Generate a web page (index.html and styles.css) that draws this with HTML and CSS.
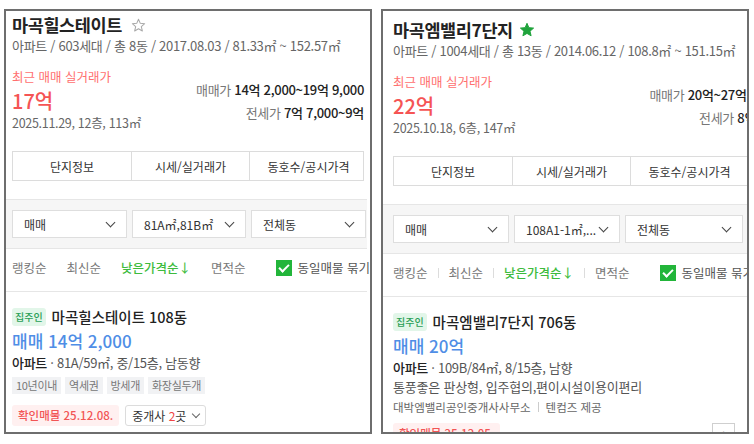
FILE: index.html
```html
<!DOCTYPE html>
<html lang="ko">
  <head>
    <meta charset="UTF-8" />
    <meta name="viewport" content="width=device-width, initial-scale=1.0" />
    <title>단지 비교</title>
    <link rel="stylesheet" href="styles.css">
  </head>
  <body>
    <div class="board">
      <!-- 왼쪽 캡처 -->
      <section class="shot">
        <div class="page">
          <header class="head">
            <h1 class="name">마곡힐스테이트
              <svg class="star" viewBox="0 0 16 16" width="15" height="15"><path d="M8 1.3l1.9 4.4 4.7.4-3.6 3.1 1.1 4.6L8 11.4l-4.1 2.4 1.1-4.6L1.4 6.1l4.7-.4z" fill="none" stroke="#a9a9a9" stroke-width="1.1" stroke-linejoin="round"/></svg>
            </h1>
            <p class="meta">아파트 / 603세대 / 총 8동 / 2017.08.03 / 81.33㎡ ~ 152.57㎡</p>
            <div class="deal">
              <div class="recent">
                <p class="recent-label">최근 매매 실거래가</p>
                <p class="recent-price">17억</p>
                <p class="recent-date">2025.11.29, 12층, 113㎡</p>
              </div>
              <div class="range">
                <p><span>매매가</span> <b>14억 2,000~19억 9,000</b></p>
                <p><span>전세가</span> <b>7억 7,000~9억</b></p>
              </div>
            </div>
            <nav class="tabs">
              <a>단지정보</a>
              <a>시세/실거래가</a>
              <a>동호수/공시가격</a>
            </nav>
          </header>

          <div class="filters">
            <div class="select">매매<i class="chev"></i></div>
            <div class="select">81A㎡,81B㎡<i class="chev"></i></div>
            <div class="select">전체동<i class="chev"></i></div>
          </div>

          <div class="sort">
            <span>랭킹순</span><em></em>
            <span>최신순</span><em></em>
            <span class="on">낮은가격순↓</span><em></em>
            <span>면적순</span>
            <label class="same"><i class="check"></i>동일매물 묶기</label>
          </div>

          <article class="item">
            <div class="item-title"><span class="owner">집주인</span>마곡힐스테이트 108동</div>
            <p class="item-price">매매 14억 2,000</p>
            <p class="item-spec"><b>아파트</b> · 81A/59㎡, 중/15층, 남동향</p>
            <div class="tags">
              <span>10년이내</span><span>역세권</span><span>방세개</span><span>화장실두개</span>
            </div>
            <div class="item-foot">
              <span class="confirm">확인매물 25.12.08.</span>
              <span class="agents"><span>중개사 <em>2</em>곳</span><i class="chev small"></i></span>
            </div>
          </article>
        </div>
      </section>

      <!-- 오른쪽 캡처 -->
      <section class="shot">
        <div class="page page-wide">
          <header class="head">
            <h1 class="name">마곡엠밸리7단지
              <svg class="star" viewBox="0 0 16 16" width="16" height="16"><path d="M8 1.3l1.9 4.4 4.7.4-3.6 3.1 1.1 4.6L8 11.4l-4.1 2.4 1.1-4.6L1.4 6.1l4.7-.4z" fill="#1fa33b" stroke="#1fa33b" stroke-width="1" stroke-linejoin="round"/></svg>
            </h1>
            <p class="meta">아파트 / 1004세대 / 총 13동 / 2014.06.12 / 108.8㎡ ~ 151.15㎡</p>
            <div class="deal">
              <div class="recent">
                <p class="recent-label">최근 매매 실거래가</p>
                <p class="recent-price">22억</p>
                <p class="recent-date">2025.10.18, 6층, 147㎡</p>
              </div>
              <div class="range">
                <p><span>매매가</span> <b>20억~27억 5,000</b></p>
                <p><span>전세가</span> <b>8억~9억</b></p>
              </div>
            </div>
            <nav class="tabs">
              <a>단지정보</a>
              <a>시세/실거래가</a>
              <a>동호수/공시가격</a>
            </nav>
          </header>

          <div class="filters">
            <div class="select">매매<i class="chev"></i></div>
            <div class="select">108A1-1㎡,...<i class="chev"></i></div>
            <div class="select">전체동<i class="chev"></i></div>
          </div>

          <div class="sort">
            <span>랭킹순</span><em></em>
            <span>최신순</span><em></em>
            <span class="on">낮은가격순↓</span><em></em>
            <span>면적순</span>
            <label class="same"><i class="check"></i>동일매물 묶기</label>
          </div>

          <article class="item">
            <div class="item-title"><span class="owner">집주인</span>마곡엠밸리7단지 706동</div>
            <p class="item-price">매매 20억</p>
            <p class="item-spec"><b>아파트</b> · 109B/84㎡, 8/15층, 남향</p>
            <p class="item-desc">통풍좋은 판상형, 입주협의,편이시설이용이편리</p>
            <p class="item-agency">대박엠밸리공인중개사사무소<em></em>텐컴즈 제공</p>
            <div class="item-foot">
              <span class="confirm">확인매물 25.12.05.</span>
              <span class="more">+</span>
            </div>
          </article>
        </div>
      </section>
    </div>
  </body>
</html>
```

FILE: styles.css
```css
* {
  box-sizing: border-box;
}
body {
  margin: 0;
  background: #fff;
  color: #333;
  font-family: "Noto Sans CJK KR", "Noto Sans", sans-serif;
}
p {
  margin: 0;
}
.board {
  display: flex;
  gap: 9px;
  padding: 9px 0 0 4px;
}
.shot {
  width: 368px;
  height: 425px;
  border: 2px solid #6e6e6e;
  overflow: hidden;
  background: #fff;
}
.page {
  width: 361px;
  padding-top: 3px;
}
.page-wide {
  width: 402px;
  padding-top: 8px;
}
.head {
  padding: 0 3px 18px 6px;
}
.page-wide .head,
.page-wide .filters,
.page-wide .sort,
.page-wide .item {
  padding-left: 10px;
}
.name {
  margin: 0;
  display: flex;
  align-items: center;
  gap: 9px;
  font-size: 17.5px;
  line-height: 22px;
  font-weight: 700;
  color: #222;
  letter-spacing: -0.4px;
}
.page-wide .name {
  gap: 6px;
}
.meta {
  margin-top: 1px;
  font-size: 13px;
  line-height: 18px;
  color: #666;
  letter-spacing: -0.3px;
  white-space: nowrap;
}
.deal {
  display: flex;
  justify-content: space-between;
  align-items: flex-start;
  margin-top: 13px;
}
.recent-label {
  font-size: 12.5px;
  line-height: 18px;
  color: #ff6f6f;
}
.recent-price {
  margin-top: 2px;
  font-size: 20px;
  line-height: 26px;
  font-weight: 500;
  color: #f55454;
}
.recent-date {
  font-size: 12.5px;
  line-height: 18px;
  color: #666;
  letter-spacing: -0.3px;
}
.range {
  padding-top: 10px;
  text-align: right;
  font-size: 13px;
  line-height: 23px;
  letter-spacing: -0.3px;
  white-space: nowrap;
}
.range span {
  color: #777;
}
.range b {
  font-weight: 500;
  color: #222;
}
.tabs {
  display: grid;
  grid-template-columns: repeat(3, 118px);
  margin-top: 19px;
  border: 1px solid #dcdcdc;
}
.tabs a {
  height: 28px;
  display: flex;
  align-items: center;
  justify-content: center;
  font-size: 12px;
  color: #333;
  border-left: 1px solid #dcdcdc;
}
.tabs a:first-child {
  border-left: none;
}
.filters {
  display: grid;
  grid-template-columns: 115px 114px 115px;
  gap: 5px;
  padding: 10px 3px 10px 6px;
  background: #f6f6f6;
  border-top: 1px solid #e6e6e6;
  border-bottom: 1px solid #e6e6e6;
}
.page-wide .filters {
  grid-template-columns: 116px 106px 118px;
}
.select {
  height: 28px;
  display: flex;
  align-items: center;
  justify-content: space-between;
  padding: 0 10px 0 11px;
  background: #fff;
  border: 1px solid #dedede;
  font-size: 12px;
  color: #333;
  white-space: nowrap;
}
.chev {
  width: 7px;
  height: 7px;
  border-right: 1.5px solid #444;
  border-bottom: 1.5px solid #444;
  transform: rotate(45deg);
  margin-top: -4px;
  margin-right: 2px;
}
.chev.small {
  width: 6px;
  height: 6px;
  border-width: 1px;
  border-color: #666;
  margin: -3px 0 0 7px;
}
.sort {
  display: flex;
  align-items: center;
  padding: 10px 3px 14px 6px;
  font-size: 12.5px;
  line-height: 18px;
  color: #777;
  border-bottom: 1px solid #e6e6e6;
  white-space: nowrap;
}
.sort em {
  width: 1px;
  height: 10px;
  margin: 0 10px;
  background: #dcdcdc;
}
.sort .on {
  color: #3dbb3d;
  font-weight: 500;
}
.same {
  display: flex;
  align-items: center;
  margin-left: 30px;
  color: #555;
}
.check {
  position: relative;
  width: 16px;
  height: 16px;
  margin-right: 6px;
  background: #22b53a;
}
.check::after {
  content: "";
  position: absolute;
  left: 5px;
  top: 2px;
  width: 4px;
  height: 8px;
  border-right: 2px solid #fff;
  border-bottom: 2px solid #fff;
  transform: rotate(45deg);
}
.item {
  padding: 15px 3px 0 6px;
}
.item-title {
  display: flex;
  align-items: center;
  gap: 6px;
  font-size: 14.5px;
  line-height: 20px;
  font-weight: 500;
  color: #222;
}
.owner {
  height: 18px;
  padding: 0 3px;
  border-radius: 3px;
  background: #e2f6e9;
  color: #2a9f56;
  font-size: 10px;
  line-height: 18px;
  font-weight: 500;
}
.item-price {
  margin-top: 2px;
  font-size: 17px;
  line-height: 24px;
  font-weight: 500;
  color: #4f8ee6;
}
.item-spec {
  margin-top: 1px;
  font-size: 13px;
  line-height: 18px;
  color: #555;
  letter-spacing: -0.3px;
}
.item-spec b {
  font-weight: 500;
  color: #222;
}
.item-desc {
  margin-top: 1px;
  font-size: 13px;
  line-height: 18px;
  color: #555;
  letter-spacing: -0.2px;
}
.item-agency {
  display: flex;
  align-items: center;
  margin-top: 3px;
  font-size: 11.5px;
  line-height: 16px;
  color: #666;
}
.item-agency em {
  width: 1px;
  height: 10px;
  margin: 0 7px;
  background: #ccc;
}
.tags {
  display: flex;
  gap: 4px;
  margin-top: 5px;
}
.tags span {
  height: 17px;
  padding: 0 4px;
  background: #f1f2f4;
  color: #777;
  font-size: 11px;
  line-height: 17px;
  letter-spacing: -0.3px;
}
.item-foot {
  display: flex;
  align-items: center;
  gap: 6px;
  margin-top: 11px;
}
.page-wide .item-foot {
  margin-top: 8px;
  justify-content: space-between;
  padding-right: 47px;
}
.confirm {
  height: 21px;
  padding: 0 6px;
  border-radius: 3px;
  background: #fff0f0;
  color: #f25555;
  font-size: 11.5px;
  line-height: 21px;
  font-weight: 500;
}
.agents {
  display: flex;
  align-items: center;
  height: 21px;
  padding: 0 6px;
  border: 1px solid #dcdcdc;
  border-radius: 3px;
  font-size: 12px;
  color: #333;
}
.agents em {
  font-style: normal;
  color: #f04545;
}
.more {
  width: 23px;
  height: 21px;
  border: 1px solid #cfcfcf;
  text-align: center;
  font-size: 12px;
  line-height: 19px;
  color: #888;
}
```
